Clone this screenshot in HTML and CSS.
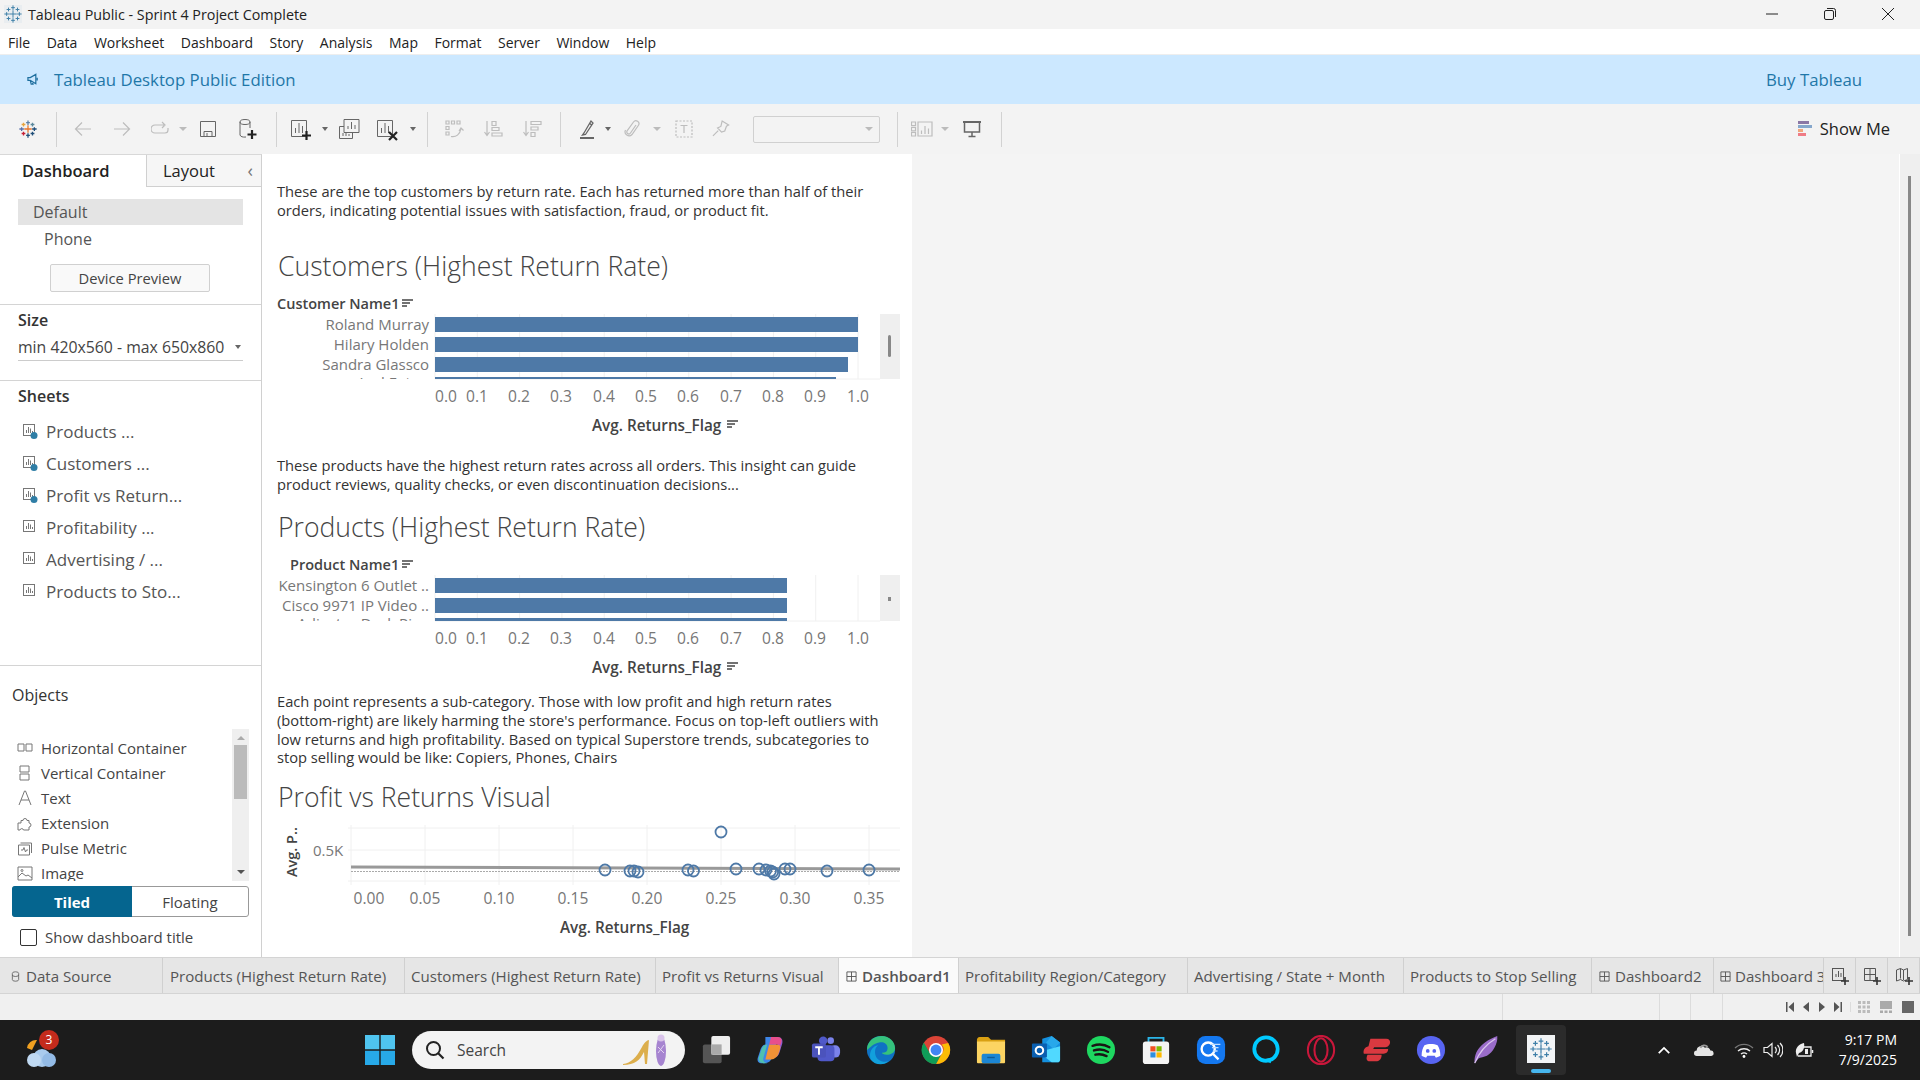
FILE: index.html
```html
<!DOCTYPE html>
<html lang="en">
<head>
    <meta charset="UTF-8">
    <title>Tableau Public - Sprint 4 Project Complete</title>
    <link rel="stylesheet" href="styles.css">
</head>
<body>

    <!-- shared icons -->
    <svg class="sprite" xmlns="http://www.w3.org/2000/svg">
        <symbol id="logo" viewBox="0 0 24 24">
            <path d="M12 7v10M7 12h10M12 .5v6M9.5 3.500h5M12 17.500v6M9.500 20.500h5M.5 12h6M3.500 9.500v5M17.500 12h6M20.500 9.500v5M6 3.500v5M3.500 6h5M18 3.500v5M15.500 6h5M6 15.500v5M3.500 18h5M18 15.500v5M15.500 18h5"/>
        </symbol>
        <symbol id="sheet" viewBox="0 0 16 16">
            <rect x="1.500" y="1.500" width="11" height="11" fill="none" stroke="#777"/>
            <path d="M4.500 10V7M6.500 10V4M8.500 10V5.500M10.500 10V8" stroke="#777"/>
        </symbol>
        <symbol id="sheet-used" viewBox="0 0 16 16">
            <rect x="1.500" y="1.500" width="11" height="11" fill="none" stroke="#777"/>
            <path d="M4.500 10V7M6.500 10V4M8.500 10V5.500M10.500 10V8" stroke="#777"/>
            <circle cx="12" cy="12.500" r="3.500" fill="#2f7ea6"/>
        </symbol>
        <symbol id="sortmark" viewBox="0 0 11 10">
            <path d="M0 1h11M0 4h8M0 7h5" stroke="#444" stroke-width="1.500" fill="none"/>
        </symbol>
        <symbol id="grid-tab" viewBox="0 0 12 12">
            <path d="M1 1h10v10H1zM6 1v10M1 6h10" fill="none" stroke="#555"/>
        </symbol>
    </svg>

    <div class="titlebar">
        <svg class="app-icon" viewBox="0 0 24 24"><rect width="24" height="24" fill="#e9edf0"/><use href="#logo" class="logo-mono"/></svg>
        <span class="app-title">Tableau Public - Sprint 4 Project Complete</span>
        <div class="winctl">
            <svg viewBox="0 0 12 12"><path d="M0 6h12"/></svg>
            <svg viewBox="0 0 12 12"><rect x=".5" y="2.500" width="9" height="9" rx="1.500"/><path d="M3 .5h6.500a2 2 0 0 1 2 2V9"/></svg>
            <svg viewBox="0 0 12 12"><path d="M0 0l12 12M12 0L0 12"/></svg>
        </div>
    </div>

    <div class="menubar">
        <span>File</span><span>Data</span><span>Worksheet</span><span>Dashboard</span><span>Story</span><span>Analysis</span><span>Map</span><span>Format</span><span>Server</span><span>Window</span><span>Help</span>
    </div>

    <div class="banner">
        <svg class="horn" viewBox="0 0 14 14"><path d="M1 5v3h2.500l6 3.500V1.500L3.500 5zM3.500 8l1 4h2l-1-3M11 5v3" fill="none" stroke="#1f6f9f" stroke-width="1.300"/></svg>
        <span class="banner-text">Tableau Desktop Public Edition</span>
        <span class="buy">Buy Tableau</span>
    </div>

    <div class="toolbar">
        <div class="tb-logo"><svg viewBox="0 0 24 24" class="i18"><g class="logo-color">
            <path d="M12 7v10M7 12h10" stroke="#e8762c"/>
            <path d="M12 .5v6M9.500 3.500h5" stroke="#5b7fa6"/>
            <path d="M12 17.500v6M9.500 20.500h5" stroke="#1f4e79"/>
            <path d="M.5 12h6M3.500 9.500v5" stroke="#5a6fa8"/>
            <path d="M17.500 12h6M20.500 9.500v5" stroke="#1f4e79"/>
            <path d="M6 3.500v5M3.500 6h5" stroke="#e8a33d"/>
            <path d="M18 3.500v5M15.500 6h5" stroke="#59879b"/>
            <path d="M6 15.500v5M3.500 18h5" stroke="#c72035"/>
            <path d="M18 15.500v5M15.500 18h5" stroke="#1f4e79"/>
        </g></svg></div>
        <i class="tb-sep"></i>

        <div class="tb-group tb-history">
            <span class="tool"><svg class="i18 dim" viewBox="0 0 18 18"><path d="M17 9H2M8 2.500L1.500 9 8 15.500" stroke-width="2"/></svg></span>
            <span class="tool"><svg class="i18 dim" viewBox="0 0 18 18"><path d="M1 9h15M10 2.500L16.500 9 10 15.500" stroke-width="2"/></svg></span>
            <span class="tool"><svg class="i18 dim" viewBox="0 0 18 18"><path d="M13 5H4a3 3 0 0 0 0 8h10a3 3 0 0 0 3-3V8M11 2l3 3-3 3" stroke-width="1.400"/></svg></span>
            <span class="caret"></span>
            <span class="tool"><svg class="i20 dark" viewBox="0 0 20 20"><path d="M2.500 2.500h15v15h-15zM6 17.500v-5h8v5M9 14v3.500h3"/></svg></span>
            <span class="tool"><svg class="i24 dark" viewBox="0 0 24 24"><ellipse cx="10" cy="5" rx="5" ry="2.500"/><path d="M5 5v13a5 2.500 0 0 0 6 2M15 5v6"/><path d="M17 13v9M12.500 17.500h9" stroke="#222" stroke-width="2.200"/></svg></span>
        </div>
        <i class="tb-sep"></i>

        <div class="tb-group tb-sheets">
            <span class="tool"><svg class="i24 dark" viewBox="0 0 24 24"><path d="M2.500 3.500h15v16h-15zM6.500 16v-5M10 16V6M13.500 16V9"/><path d="M17.500 14v9M13 18.500h9" stroke="#222" stroke-width="2.200"/></svg></span>
            <span class="caret dark-caret"></span>
            <span class="tool"><svg class="i24 dark" viewBox="0 0 24 24"><path d="M7 2.500h15v13H7zM11 12V9M14.500 12V5M18 12V8"/><path d="M2.500 9.500H7M2.500 9.500v12h13v-6M6 19v-3M9 19v-4M12 19v-2"/></svg></span>
            <span class="tool"><svg class="i24 dark" viewBox="0 0 24 24"><path d="M2.500 3.500h15v16h-15zM6.500 16v-5M10 16V6M13.500 16V9"/><path d="M14 15l8 8M22 15l-8 8" stroke="#222" stroke-width="2.200"/></svg></span>
            <span class="caret dark-caret"></span>
        </div>
        <i class="tb-sep"></i>

        <div class="tb-group tb-sort">
            <span class="tool"><svg class="i20 dim" viewBox="0 0 20 20"><path d="M2 2h3v3H2zM7.500 2h3v3h-3zM13 2h3v3h-3zM2 7.500h3v3H2zM2 13h3v3H2zM7 17.500c5 1 9-2 10-8M15 12l2-3 2.500 2.500"/></svg></span>
            <span class="tool"><svg class="i20 dim" viewBox="0 0 20 20"><path d="M4 2v14M1.500 13L4 16.500 6.500 13M9 2.500h4v4H9zM9 8.500h7v3H9zM9 14h10v3H9z"/></svg></span>
            <span class="tool"><svg class="i20 dim" viewBox="0 0 20 20"><path d="M4 2v14M1.500 13L4 16.500 6.500 13M9 2.500h10v3H9zM9 8h7v3H9zM9 13.500h4v4H9z"/></svg></span>
        </div>
        <i class="tb-sep"></i>

        <div class="tb-group tb-format">
            <span class="tool"><svg class="i20 dark" viewBox="0 0 20 20"><path d="M6 14l-1.500 2 3-.5L15 4l-2-2zM11.500 4l2 2" stroke-width="1.300"/><path d="M2 19h14" stroke-width="2"/></svg></span>
            <span class="caret dark-caret"></span>
            <span class="tool"><svg class="i20 dim" viewBox="0 0 20 20"><path d="M13 6l-5.500 8a2 2 0 0 1-3.400-2.200L10.500 3a3 3 0 0 1 5 3.300L9 15.500a4 4 0 0 1-6.500-4.500"/></svg></span>
            <span class="caret"></span>
            <span class="tool"><svg class="i18 dim" viewBox="0 0 18 18"><path d="M1 1h16v16H1z" stroke-dasharray="2 1.500"/><path d="M5.500 5.500h7M9 5.500v7.500"/></svg></span>
            <span class="tool"><svg class="i18 dim" viewBox="0 0 18 18"><path d="M9 1l7 3-2 1.500-1 5-3 1.500L5.500 8.500l3-2zM6.500 11L2 17" transform="rotate(8 9 9)"/></svg></span>
            <span class="tb-select"><span class="caret"></span></span>
        </div>
        <i class="tb-sep"></i>

        <div class="tb-group tb-view">
            <span class="tool"><svg class="i22 dim" viewBox="0 0 24 16"><path d="M.5 1h4v3.500h-4zM.5 6.300h4v3.500h-4zM.5 11.500h4V15h-4zM7 1h14v14H7z"/><path d="M10.500 13V9.500M14 13V5M17.500 13V7.500" stroke-width="2"/></svg></span>
            <span class="caret"></span>
            <span class="tool"><svg class="i20 darker" viewBox="0 0 20 20"><path d="M1 3h18" stroke-width="2"/><path d="M2.500 4v9h15V4M10 13v4.500M6.500 17.500h7" stroke-width="1.500"/></svg></span>
        </div>
        <i class="tb-sep"></i>

        <div class="show-me">
            <span class="sm-bars"><i></i><i></i><i></i><i></i></span>
            <span>Show Me</span>
        </div>
    </div>

    <div class="work">
        <aside class="side">
            <div class="side-tabs">
                <span class="side-tab active">Dashboard</span>
                <span class="side-tab">Layout<em>‹</em></span>
            </div>

            <div class="side-sec devices">
                <div class="device on">Default</div>
                <div class="device">Phone</div>
                <div class="device-btn">Device Preview</div>
            </div>

            <div class="side-sec size-sec">
                <h4>Size</h4>
                <div class="size-pick"><span>min 420x560 - max 650x860</span><span class="caret dark-caret"></span></div>
            </div>

            <div class="side-sec sheets-sec">
                <h4>Sheets</h4>
                <ul class="sheets">
                    <li><svg viewBox="0 0 16 16"><use href="#sheet-used"/></svg>Products ...</li>
                    <li><svg viewBox="0 0 16 16"><use href="#sheet-used"/></svg>Customers ...</li>
                    <li><svg viewBox="0 0 16 16"><use href="#sheet-used"/></svg>Profit vs Return...</li>
                    <li><svg viewBox="0 0 16 16"><use href="#sheet"/></svg>Profitability ...</li>
                    <li><svg viewBox="0 0 16 16"><use href="#sheet"/></svg>Advertising / ...</li>
                    <li><svg viewBox="0 0 16 16"><use href="#sheet"/></svg>Products to Sto...</li>
                </ul>
            </div>

            <div class="objects">
                <h5>Objects</h5>
                <div class="obj-list">
                    <ul>
                        <li><svg viewBox="0 0 16 16"><path d="M1 4h6v7H1zM9 4h6v7H9z"/></svg>Horizontal Container</li>
                        <li><svg viewBox="0 0 16 16"><path d="M3 1h9v6H3zM3 9h9v6H3z"/></svg>Vertical Container</li>
                        <li><svg viewBox="0 0 16 16"><path d="M2 15L7.500 1h1L14 15M4 10h8"/></svg>Text</li>
                        <li><svg viewBox="0 0 16 16"><path d="M1 8h3V5.500h2a2 2 0 0 1 4 0h2V8a2 2 0 0 1 0 4v3H6.500a1.800 1.800 0 0 0-3.500 0H1z"/></svg>Extension</li>
                        <li><svg viewBox="0 0 16 16"><path d="M1.500 5h11v10h-11zM3.500 3h11v10M4 10h2l1-2.500L8.500 12l1-2h1.500"/></svg>Pulse Metric</li>
                        <li><svg viewBox="0 0 16 16"><path d="M1 2h14v13H1zM1 12l4-4 4 3 2-1 4 3"/><circle cx="5" cy="5.500" r="1"/></svg>Image</li>
                    </ul>
                    <div class="obj-scroll"><b class="up"></b><i></i><b class="down"></b></div>
                </div>
                <div class="seg"><span class="seg-on">Tiled</span><span>Floating</span></div>
                <label class="chk"><i></i>Show dashboard title</label>
            </div>
        </aside>

        <main class="canvas">
            <p class="note">These are the top customers by return rate. Each has returned more than half of their<br>orders, indicating potential issues with satisfaction, fraud, or product fit.</p>
            <h2 class="viz-title first">Customers (Highest Return Rate)</h2>
            <svg class="chart chart-cust" viewBox="262 290 640 145">
                <defs><clipPath id="clip1"><rect x="262" y="314" width="618" height="65"/></clipPath></defs>
                <text class="hdr" x="277" y="309">Customer Name1</text>
                <use href="#sortmark" x="402" y="299" width="11" height="10"/>
                <path class="grid" d="M435 314v65M477.300 314v65M519.600 314v65M561.900 314v65M604.200 314v65M646.500 314v65M688.800 314v65M731.100 314v65M773.400 314v65M815.700 314v65M858 314v65M435 379h445"/>
                <g clip-path="url(#clip1)">
                    <rect class="bar" x="435" y="317" width="423" height="15"/>
                    <rect class="bar" x="435" y="337" width="423" height="15"/>
                    <rect class="bar" x="435" y="357" width="413" height="15"/>
                    <rect class="bar" x="435" y="377" width="401" height="15"/>
                    <text class="lbl end" x="429" y="330">Roland Murray</text>
                    <text class="lbl end" x="429" y="350">Hilary Holden</text>
                    <text class="lbl end" x="429" y="370">Sandra Glassco</text>
                    <text class="lbl end" x="429" y="388">Joel Eaton</text>
                </g>
                <rect class="strip" x="880" y="314" width="20" height="65"/>
                <rect class="thumb" x="888" y="335" width="3" height="22" rx="1.500"/>
                <g class="tick mid">
                    <text x="446" y="402">0.0</text><text x="477" y="402">0.1</text><text x="519" y="402">0.2</text><text x="561" y="402">0.3</text><text x="604" y="402">0.4</text><text x="646" y="402">0.5</text><text x="688" y="402">0.6</text><text x="731" y="402">0.7</text><text x="773" y="402">0.8</text><text x="815" y="402">0.9</text><text x="858" y="402">1.0</text>
                </g>
                <text class="hdr axis" x="592" y="431">Avg. Returns_Flag</text>
                <use href="#sortmark" x="727" y="420" width="11" height="10"/>
            </svg>

            <p class="note note-2">These products have the highest return rates across all orders. This insight can guide<br>product reviews, quality checks, or even discontinuation decisions...</p>
            <h2 class="viz-title second">Products (Highest Return Rate)</h2>
            <svg class="chart chart-prod" viewBox="262 552 640 128">
                <defs><clipPath id="clip2"><rect x="262" y="575" width="618" height="46"/></clipPath></defs>
                <text class="hdr" x="290" y="570">Product Name1</text>
                <use href="#sortmark" x="402" y="560" width="11" height="10"/>
                <path class="grid" d="M435 575v46M477.300 575v46M519.600 575v46M561.900 575v46M604.200 575v46M646.500 575v46M688.800 575v46M731.100 575v46M773.400 575v46M815.700 575v46M858 575v46M435 621h445"/>
                <g clip-path="url(#clip2)">
                    <rect class="bar" x="435" y="578" width="352" height="15"/>
                    <rect class="bar" x="435" y="598" width="352" height="15"/>
                    <rect class="bar" x="435" y="618" width="352" height="15"/>
                    <text class="lbl end" x="429" y="591">Kensington 6 Outlet ..</text>
                    <text class="lbl end" x="429" y="611">Cisco 9971 IP Video ..</text>
                    <text class="lbl end" x="429" y="629">Adjustac Desk Pin..</text>
                </g>
                <rect class="strip" x="880" y="575" width="20" height="46"/>
                <rect class="thumb" x="888" y="597" width="3" height="4"/>
                <g class="tick mid">
                    <text x="446" y="644">0.0</text><text x="477" y="644">0.1</text><text x="519" y="644">0.2</text><text x="561" y="644">0.3</text><text x="604" y="644">0.4</text><text x="646" y="644">0.5</text><text x="688" y="644">0.6</text><text x="731" y="644">0.7</text><text x="773" y="644">0.8</text><text x="815" y="644">0.9</text><text x="858" y="644">1.0</text>
                </g>
                <text class="hdr axis" x="592" y="673">Avg. Returns_Flag</text>
                <use href="#sortmark" x="727" y="662" width="11" height="10"/>
            </svg>

            <p class="note note-3">Each point represents a sub-category. Those with low profit and high return rates<br>(bottom-right) are likely harming the store's performance. Focus on top-left outliers with<br>low returns and high profitability. Based on typical Superstore trends, subcategories to<br>stop selling would be like: Copiers, Phones, Chairs</p>
            <h2 class="viz-title third">Profit vs Returns Visual</h2>
            <svg class="chart chart-scatter" viewBox="262 818 640 122">
                <path class="grid" d="M351 825v60M425 825v60M499 825v60M573 825v60M647 825v60M721 825v60M795 825v60M869 825v60M348 828h552M348 850h552M348 881h552"/>
                <path class="trend" d="M351 867L900 869"/>
                <path class="trend-band" d="M351 871.500L900 871.500"/>
                <g class="dots">
                    <circle cx="605" cy="870" r="5.500"/><circle cx="630" cy="871" r="5.500"/><circle cx="634" cy="871" r="5.500"/><circle cx="638" cy="872" r="5.500"/><circle cx="688" cy="870" r="5.500"/><circle cx="693.500" cy="871" r="5.500"/><circle cx="721" cy="832" r="5.500"/><circle cx="736" cy="869" r="5.500"/><circle cx="759" cy="869" r="5.500"/><circle cx="766" cy="870" r="5.500"/><circle cx="770.500" cy="871" r="5.500"/><circle cx="772.600" cy="872" r="5.500"/><circle cx="774" cy="874" r="5.500"/><circle cx="785" cy="869" r="5.500"/><circle cx="790" cy="869" r="5.500"/><circle cx="827" cy="871" r="5.500"/><circle cx="869" cy="870" r="5.500"/>
                </g>
                <text class="lbl" x="313" y="856">0.5K</text>
                <text class="hdr" transform="translate(297 877) rotate(-90)">Avg. P..</text>
                <g class="tick mid">
                    <text x="369" y="904">0.00</text><text x="425" y="904">0.05</text><text x="499" y="904">0.10</text><text x="573" y="904">0.15</text><text x="647" y="904">0.20</text><text x="721" y="904">0.25</text><text x="795" y="904">0.30</text><text x="869" y="904">0.35</text>
                </g>
                <text class="hdr axis" x="560" y="933">Avg. Returns_Flag</text>
            </svg>
        </main>

        <div class="backdrop"><div class="page-scroll"><i></i></div></div>
    </div>

    <div class="tabs">
        <span class="tab tab-ds"><svg viewBox="0 0 10 14"><path d="M1 3a4 2 0 0 1 8 0v8a4 2 0 0 1-8 0zM1 5a4 2 0 0 0 8 0" fill="none" stroke="#555"/></svg>Data Source</span>
        <span class="tab tab-a">Products (Highest Return Rate)</span>
        <span class="tab tab-b">Customers (Highest Return Rate)</span>
        <span class="tab tab-c">Profit vs Returns Visual</span>
        <span class="tab tab-d tab-on"><svg viewBox="0 0 12 12"><use href="#grid-tab"/></svg>Dashboard1</span>
        <span class="tab tab-e">Profitability Region/Category</span>
        <span class="tab tab-f">Advertising / State + Month</span>
        <span class="tab tab-g">Products to Stop Selling</span>
        <span class="tab tab-h"><svg viewBox="0 0 12 12"><use href="#grid-tab"/></svg>Dashboard2</span>
        <span class="tab tab-i"><svg viewBox="0 0 12 12"><use href="#grid-tab"/></svg>Dashboard 3</span>
        <span class="tab-add"><svg viewBox="0 0 20 20"><rect x="2.500" y="2.500" width="11" height="12" fill="none" stroke="#555"/><path d="M6 11V8M8.500 11V5M11 11V7" stroke="#555"/><path d="M15 11v8M11 15h8" stroke="#333" stroke-width="1.600"/></svg></span>
        <span class="tab-add"><svg viewBox="0 0 20 20"><path d="M2.500 2.500h11v12h-11zM8 2.500v12M2.500 8.500h11" fill="none" stroke="#555"/><path d="M15 11v8M11 15h8" stroke="#333" stroke-width="1.600"/></svg></span>
        <span class="tab-add"><svg viewBox="0 0 20 20"><path d="M2.500 4l4-1.500 3 1.500 4-1.500v11l-4 1.500-3-1.500-4 1.500zM6.500 2.500v10M9.500 4v10" fill="none" stroke="#555"/><path d="M15 11v8M11 15h8" stroke="#333" stroke-width="1.600"/></svg></span>
    </div>

    <div class="statusbar">
        <i class="st-div d1"></i><i class="st-div d2"></i><i class="st-div d3"></i><i class="st-div d4"></i>
        <div class="st-nav">
            <svg viewBox="0 0 8 10"><path d="M0 0h1.500v10H0zM8 0v10L2.500 5z"/></svg>
            <svg viewBox="0 0 8 10"><path d="M7 0v10L1 5z"/></svg>
            <svg viewBox="0 0 8 10"><path d="M1 0v10l6-5z"/></svg>
            <svg viewBox="0 0 8 10"><path d="M8 0H6.500v10H8zM0 0v10l5.500-5z"/></svg>
        </div>
        <div class="st-views">
            <svg viewBox="0 0 12 12" fill="#bbb"><path d="M0 0h3v3H0zM4.500 0h3v3h-3zM9 0h3v3H9zM0 4.500h3v3H0zM4.500 4.500h3v3h-3zM9 4.500h3v3H9zM0 9h3v3H0zM4.500 9h3v3h-3zM9 9h3v3H9z"/></svg>
            <svg viewBox="0 0 12 12" fill="#aaa"><path d="M0 0h12v8H0zM0 9.500h3v2.500H0zM4.500 9.500h3v2.500h-3zM9 9.500h3v2.500H9z"/></svg>
            <svg viewBox="0 0 12 12" fill="#666"><path d="M0 0h12v12H0z"/></svg>
        </div>
    </div>

    <div class="taskbar">
        <div class="weather">
            <svg viewBox="0 0 32 36"><path d="M12 8a9 9 0 0 0-10 8l5 2z" fill="#f0a020"/><circle cx="17" cy="26" r="9" fill="#a9cbee"/><circle cx="9" cy="28" r="7" fill="#c0d9f2"/><circle cx="24" cy="28" r="7" fill="#93bbe6"/></svg>
            <b>3</b>
        </div>
        <div class="start">
            <svg class="win" viewBox="0 0 30 30"><path fill="#4fc4ef" d="M0 0h14.300v14.300H0zM15.700 0H30v14.300H15.700z"/><path fill="#27a9e8" d="M0 15.700h14.300V30H0zM15.700 15.700H30V30H15.700z"/></svg>
            <div class="search">
                <svg viewBox="0 0 20 20"><circle cx="8.500" cy="8.500" r="6.500" fill="none" stroke="#222" stroke-width="2"/><path d="M13 13l5.500 5.500" stroke="#222" stroke-width="2.200"/></svg>
                <span>Search</span>
                <svg class="promo" viewBox="0 0 46 34"><path d="M0 31c8-1 13-6 19-17 2-4 5-7 7-7l-2 24h-2l-1-12c-4 8-9 13-21 13z" fill="#dcae4c"/><ellipse cx="38" cy="18" rx="5" ry="15" fill="#a684d0"/><circle cx="38" cy="5" r="3.500" fill="#d9c3ea"/><path d="M35 14l6 6M41 12l-6 8" stroke="#e3d4f0"/></svg>
            </div>
            <svg class="ti" viewBox="0 0 32 32"><rect x="2" y="10" width="20" height="20" rx="2" fill="#555"/><rect x="11" y="1" width="20" height="20" rx="2" fill="#eee"/><rect x="11" y="10" width="11" height="11" fill="#aaa"/></svg>
            <svg class="ti" viewBox="0 0 32 32"><path d="M10 2h8c4 0 5 3 4 6l-5 16c-1 4-4 6-8 6H5c-3 0-4-3-3-6l3-9c1-3 3-5 5-5z" fill="#3d86e8"/><path d="M14 2h9c4 0 6 3 5 7l-3 10c-1 3-3 5-6 5l4-14c1-4-3-8-9-8z" fill="#8a5cd6"/><path d="M8 30c-4 0-6-3-5-6l3-9c1-3 3-5 6-5l-4 14c-1 4 1 6 4 6z" fill="#4fc0b0"/><path d="M14 10h9c4 0 3 4 2 7l-1 3c-1 3-4 6-8 6h-6z" fill="#f39236"/><path d="M16 2h7c4 0 5 3 4 6l-1 3c-1-1-2-1-4-1h-8z" fill="#e84f8c"/></svg>
            <svg class="ti" viewBox="0 0 32 32"><circle cx="21" cy="6" r="3.500" fill="#7b83eb"/><rect x="20" y="11" width="11" height="13" rx="5" fill="#7b83eb"/><circle cx="13" cy="6" r="4.500" fill="#5059c9"/><rect x="7" y="11" width="18" height="17" rx="4" fill="#5059c9"/><rect x="1" y="9" width="15" height="15" rx="2" fill="#4b53bc"/><path d="M4.500 13h8M8.500 13v8" stroke="#fff" stroke-width="2"/></svg>
            <svg class="ti" viewBox="0 0 32 32"><circle cx="16" cy="16" r="15" fill="#0f72c4"/><path d="M1 16C1 7 8 1 17 1c8 0 14 6 14 13 0 5-5 7-9 7-3 0-5-1-5-2 4 0 6-2 6-5 0-5-5-7-9-6-6 1-9 5-13 8z" fill="#35c27d"/><path d="M5 26c-2-5 0-14 8-15-3 2-4 6-3 10 1 5 7 9 14 7-5 5-15 4-19-2z" fill="#12a0dc"/></svg>
            <svg class="ti" viewBox="0 0 32 32"><circle cx="16" cy="16" r="15" fill="#db4437"/><path d="M29 8.500A15 15 0 0 1 16 31l6.500-11.500A7.500 7.500 0 0 0 22 10z" fill="#fbbc05"/><path d="M3 8l6.500 11.500A7.500 7.500 0 0 0 22 19.500L16 31A15 15 0 0 1 3 8z" fill="#0f9d58"/><circle cx="16" cy="16" r="7.500" fill="#fff"/><circle cx="16" cy="16" r="5.800" fill="#4285f4"/></svg>
            <svg class="ti" viewBox="0 0 32 32"><path d="M1 5c0-1 1-3 3-3h9l3 3h15v3H1z" fill="#d9a012"/><path d="M1 7h30v22c0 1-1 1-1 1H2s-1 0-1-1z" fill="#fcd462"/><rect x="6" y="20" width="20" height="10" rx="2" fill="#1c86d4"/><path d="M12 24h8" stroke="#0f5b96" stroke-width="1.500"/></svg>
            <svg class="ti" viewBox="0 0 32 32"><path d="M12 4l10-3 9 7v18c0 2-1 3-3 3H12z" fill="#1490df"/><path d="M22 1l9 7-7 7-8-7z" fill="#28a8ea"/><path d="M8 18l14 11h6c2 0 3-1 3-3V12z" fill="#50d9ff"/><rect x="1" y="9" width="16" height="15" rx="1" fill="#0a5fb0"/><circle cx="9" cy="16.500" r="4" fill="none" stroke="#fff" stroke-width="2.200"/></svg>
            <svg class="ti" viewBox="0 0 32 32"><circle cx="16" cy="16" r="15" fill="#1ed760"/><path d="M7 11.500c6-2 13-1.500 18 1.500M8.500 16.500c5-1.500 11-1 15 1.500M10 21c4-1 8-.5 12 1.500" fill="none" stroke="#191414" stroke-width="2.500" stroke-linecap="round"/></svg>
            <svg class="ti" viewBox="0 0 32 32"><path d="M8 8V3h16v5" fill="none" stroke="#2bb5e8" stroke-width="2"/><rect x="2" y="7" width="28" height="24" rx="3" fill="#f4f4f4"/><path fill="#f25022" d="M10 12h5.500v5.500H10z"/><path fill="#7fba00" d="M16.500 12H22v5.500h-5.500z"/><path fill="#2f8fe0" d="M10 18.500h5.500V24H10z"/><path fill="#ffb900" d="M16.500 18.500H22V24h-5.500z"/></svg>
            <svg class="ti" viewBox="0 0 32 32"><rect x="1" y="1" width="30" height="30" rx="9" fill="#1478f0"/><circle cx="13" cy="15" r="7" fill="none" stroke="#fff" stroke-width="2.500"/><path d="M18 20l6 6" stroke="#fff" stroke-width="2.500"/><path d="M15 10h11M17 13.500h7M18 17h5" stroke="#bcdcff" stroke-width="1.500"/></svg>
            <svg class="ti" viewBox="0 0 32 32"><circle cx="16" cy="15" r="12.500" fill="none" stroke="#00caff" stroke-width="4"/><path d="M12 26l9 4 1-6z" fill="#00caff"/></svg>
            <svg class="ti" viewBox="0 0 32 32"><ellipse cx="16" cy="16" rx="14" ry="15" fill="none" stroke="#c9173b" stroke-width="2.200"/><ellipse cx="16" cy="16" rx="7" ry="12.500" fill="none" stroke="#c9173b" stroke-width="2.200"/></svg>
            <svg class="ti" viewBox="0 0 32 32"><path d="M10 4h17c3 0 4 2 4 4s-2 5-5 5H14l-1 2h16c0 3-2 5-5 5H3c-1-4 1-7 5-8l2-8z" fill="#da3940"/><path d="M7 21h15c0 5-3 7-6 7H9c-3 0-4-3-2-7z" fill="#da3940"/></svg>
            <svg class="ti" viewBox="0 0 32 32"><circle cx="16" cy="16" r="15" fill="#5865f2"/><path d="M9 11c4-2 10-2 14 0 2 3 3 7 3 11-2 1-4 2-5 2l-1-2h-8l-1 2c-1 0-3-1-5-2 0-4 1-8 3-11z" fill="#fff"/><circle cx="12.500" cy="17" r="2" fill="#5865f2"/><circle cx="19.500" cy="17" r="2" fill="#5865f2"/></svg>
            <svg class="ti" viewBox="0 0 32 32"><path d="M4 30c-1-9 3-21 24-29 1 8-5 18-11 21-3 1-7 2-9 3z" fill="#9a6cc9"/><path d="M4 30C8 20 16 10 26 4" fill="none" stroke="#dcc8ef" stroke-width="1.400"/></svg>
            <div class="ti-active">
                <svg viewBox="0 0 30 30"><rect width="30" height="30" fill="#f2f4f6"/><g transform="translate(3 3)"><use href="#logo" class="logo-mono" width="24" height="24"/></g></svg>
                <i></i>
            </div>
        </div>
        <div class="tray">
            <svg class="tr tr-chev" viewBox="0 0 16 10"><path d="M2 8l6-6 6 6" fill="none" stroke="#fff" stroke-width="2"/></svg>
            <svg class="tr tr-cloud" viewBox="0 0 22 14"><path d="M3 13a3 3 0 0 1 0-6 5 5 0 0 1 9-3 4 4 0 0 1 6 3 3 3 0 0 1 1 6z" fill="#e4e4e4"/><path d="M7 4a5 5 0 0 1 8-1" fill="none" stroke="#999" stroke-width="2"/></svg>
            <svg class="tr tr-wifi" viewBox="0 0 20 16"><path d="M1 6a13 13 0 0 1 18 0" fill="none" stroke="#777" stroke-width="1.300"/><path d="M4 9a9 9 0 0 1 12 0M7 12a5 5 0 0 1 6 0" fill="none" stroke="#eee" stroke-width="1.400"/><circle cx="10" cy="14.500" r="1.400" fill="#fff"/></svg>
            <svg class="tr tr-vol" viewBox="0 0 20 16"><path d="M1 5.500h3.500L9 1.500v13l-4.500-4H1zM12 5a4 4 0 0 1 0 6M14.500 3a7 7 0 0 1 0 10M17 1a10 10 0 0 1 0 14" fill="none" stroke="#eee" stroke-width="1.200"/></svg>
            <svg class="tr tr-bat" viewBox="0 0 20 16"><path d="M7 5h10v9H4" fill="none" stroke="#eee" stroke-width="1.300"/><path d="M18.500 8v3" stroke="#eee" stroke-width="1.500"/><path d="M2 11c-1-5 3-9 8-10 1 5-1 9-5 10L3 15z" fill="#eee"/><path d="M11 12V7l3 0v5z" fill="#eee"/></svg>
            <div class="clock"><span>9:17 PM</span><span>7/9/2025</span></div>
        </div>
    </div>

</body>
</html>
```

FILE: styles.css
```css
* {
    box-sizing: border-box;
}

html, body {
    margin: 0;
    padding: 0;
}

body {
    width: 1920px;
    height: 1080px;
    overflow: hidden;
    font-family: "Open Sans", "Noto Sans", sans-serif;
    font-size: 14px;
    color: #222;
    background: #f4f4f4;
    display: flex;
    flex-direction: column;
}

.sprite {
    display: none;
}

use.logo-mono {
    stroke: #3f7fa8;
    stroke-width: 1.300;
    fill: none;
}

/* title + menu */
.titlebar {
    height: 29px;
    background: #f3f3f3;
    display: flex;
    align-items: center;
    padding-left: 4px;
}

.app-icon {
    width: 18px;
    height: 18px;
    margin-right: 6px;
}

.app-title {
    font-size: 14.300px;
}

.winctl {
    margin-left: auto;
    display: flex;
    gap: 46px;
    padding-right: 26px;
}

.winctl svg {
    width: 12px;
    height: 12px;
    fill: none;
    stroke: #222;
    stroke-width: 1;
}

.menubar {
    height: 26px;
    background: #fff;
    border-bottom: 1px solid #eee;
    display: flex;
    align-items: center;
    gap: 16.500px;
    padding: 2px 0 0 8px;
    font-size: 14px;
}

.banner {
    height: 50px;
    background: #cce8ff;
    display: flex;
    align-items: center;
    padding: 0 58px 0 27px;
    color: #1f77a8;
    font-size: 16.800px;
}

.horn {
    width: 13px;
    height: 13px;
    margin-right: 14px;
}

.buy {
    margin-left: auto;
}

/* toolbar */
.toolbar {
    height: 50px;
    background: #f3f3f3;
    display: flex;
    align-items: center;
}

.tb-logo {
    width: 56px;
    display: flex;
    justify-content: center;
}

.logo-color path {
    stroke-width: 1.700;
    fill: none;
}

.tb-sep {
    width: 1px;
    height: 35px;
    background: #d2d2d2;
    flex: none;
}

.tb-group {
    display: grid;
    align-items: center;
    grid-auto-flow: column;
}

.tool {
    display: flex;
    justify-content: center;
    align-items: center;
}

.tool svg {
    fill: none;
}

.i18 { width: 18px; height: 18px; }
.i20 { width: 20px; height: 20px; }
.i22 { width: 24px; height: 18px; }
.i24 { width: 24px; height: 24px; }

.dim { stroke: #bdbdbd; }
.dim path { stroke-width: 1.200; }
.dark { stroke: #666; }
.darker { stroke: #666; }

.caret {
    display: block;
    width: 0;
    height: 0;
    justify-self: center;
    border-left: 4px solid transparent;
    border-right: 4px solid transparent;
    border-top: 4px solid #bbb;
}

.dark-caret {
    border-left-width: 3.500px;
    border-right-width: 3.500px;
    border-top-color: #666;
}

.tb-history {
    padding-left: 7px;
    padding-right: 11px;
    grid-template-columns: 38px 38px 36px 8px 40px 36px;
    column-gap: 1px;
}

.tb-sheets {
    padding-left: 5px;
    padding-right: 7px;
    grid-template-columns: 38px 8px 38px 36px 14px;
    column-gap: 1px;
}

.tb-sort {
    padding-left: 6px;
    padding-right: 9px;
    grid-template-columns: 39px 39px 39px;
}

.tb-format {
    padding-left: 12px;
    padding-right: 17px;
    grid-template-columns: 30px 10px 40px 8px 46px 28px 145px;
}

.tb-select {
    height: 27px;
    margin-left: 18px;
    width: 127px;
    border: 1px solid #d0d0d0;
    border-radius: 2px;
    background: #f3f3f3;
    display: flex;
    justify-content: flex-end;
    align-items: center;
    padding-right: 6px;
}

.tb-view {
    padding-left: 10px;
    padding-right: 9px;
    grid-template-columns: 30px 14px 40px;
}

.show-me {
    margin-left: auto;
    padding: 0 30px 1px 0;
    display: flex;
    align-items: center;
    gap: 8px;
    font-size: 16.500px;
}

.sm-bars {
    display: flex;
    flex-direction: column;
    width: 14px;
}

.sm-bars i {
    display: block;
    height: 3px;
    margin-bottom: 1px;
}

.sm-bars i:nth-child(1) { background: #8b77a5; width: 11px; }
.sm-bars i:nth-child(2) { background: #86a7cc; width: 14px; }
.sm-bars i:nth-child(3) { background: #f0a67c; width: 5px; }
.sm-bars i:nth-child(4) { background: #ef7b85; width: 8px; }

/* main row */
.work {
    height: 803px;
    display: flex;
    flex: none;
}

.side {
    width: 262px;
    background: #fff;
    border-top: 1px solid #d8d8d8;
    border-right: 1px solid #d0d0d0;
    display: flex;
    flex-direction: column;
}

.side-tabs {
    height: 32px;
    display: flex;
    font-size: 16.500px;
}

.side-tab {
    display: flex;
    align-items: center;
    padding-left: 22px;
    width: 146px;
}

.side-tab.active {
    font-weight: 600;
    padding-bottom: 2px;
}

.side-tab + .side-tab {
    flex: 1;
    position: relative;
    padding-left: 16px;
    background: #f6f6f6;
    border-left: 1px solid #d0d0d0;
    border-bottom: 1px solid #d0d0d0;
}

.side-tab em {
    position: absolute;
    right: 8px;
    top: 3px;
    font-style: normal;
    color: #777;
    font-size: 18px;
}

.side-sec {
    border-bottom: 1px solid #d4d4d4;
}

.devices {
    height: 118px;
    padding: 12px 18px 0;
    font-size: 16px;
    color: #555;
}

.device {
    height: 28px;
    line-height: 28px;
    padding-left: 26px;
}

.device.on {
    height: 26px;
    line-height: 26px;
    background: #e4e4e4;
    padding-left: 15px;
}

.device-btn {
    width: 160px;
    height: 28px;
    margin: 11px 0 0 32px;
    border: 1px solid #d0d0d0;
    border-radius: 2px;
    background: #f9f9f9;
    text-align: center;
    line-height: 26px;
    font-size: 14.700px;
    color: #444;
}

.side-sec h4, .objects h5 {
    margin: 0;
    font-size: 16px;
    font-weight: 600;
    color: #333;
}

.size-sec {
    height: 76px;
    padding: 4px 18px 0;
}

.size-pick {
    margin-top: 2px;
    height: 28px;
    display: flex;
    justify-content: space-between;
    align-items: center;
    border-bottom: 1px solid #ccc;
    font-size: 15.800px;
    color: #444;
    padding-right: 2px;
}

.sheets-sec {
    height: 285px;
    padding: 4px 18px 0;
}

.sheets {
    list-style: none;
    margin: 8px 0 0;
    padding: 0;
    font-size: 17px;
    color: #555;
}

.sheets li {
    height: 32px;
    display: flex;
    align-items: center;
    padding-left: 4px;
}

.sheets svg {
    width: 16px;
    height: 16px;
    margin-right: 8px;
}

.objects {
    flex: 1;
    padding: 18px 12px 0;
}

.objects h5 {
    font-weight: 500;
    line-height: 22px;
}

.obj-list {
    height: 152px;
    margin-top: 23px;
    display: flex;
    overflow: hidden;
}

.obj-list ul {
    flex: 1;
    list-style: none;
    margin: 0;
    padding: 6px 0 0 5px;
    font-size: 15px;
    color: #444;
}

.obj-list li {
    height: 25px;
    display: flex;
    align-items: center;
    gap: 8px;
}

.obj-list svg {
    width: 16px;
    height: 16px;
    fill: none;
    stroke: #777;
    flex: none;
}

.obj-scroll {
    width: 17px;
    background: #efefef;
    display: flex;
    flex-direction: column;
    align-items: center;
    padding-top: 7px;
}

.obj-scroll i {
    display: block;
    width: 13px;
    height: 54px;
    margin-top: 5px;
    background: #bbb;
}

.obj-scroll b {
    width: 0;
    height: 0;
    border-left: 4px solid transparent;
    border-right: 4px solid transparent;
}

.obj-scroll .up {
    border-bottom: 4px solid #aaa;
}

.obj-scroll .down {
    margin-top: auto;
    margin-bottom: 7px;
    border-top: 4px solid #555;
}

.seg {
    height: 31px;
    margin-top: 5px;
    display: flex;
    border: 1px solid #999;
    border-radius: 3px;
    font-size: 15px;
}

.seg span {
    flex: 1;
    display: flex;
    align-items: center;
    justify-content: center;
    color: #444;
}

.seg .seg-on {
    flex: none;
    width: 120px;
    margin: -1px 0 -1px -1px;
    background: #05658f;
    color: #fff;
    font-weight: 700;
    border-radius: 3px 0 0 3px;
}

.chk {
    display: flex;
    align-items: center;
    gap: 8px;
    margin: 10px 0 0 8px;
    font-size: 15px;
    color: #444;
}

.chk i {
    width: 17px;
    height: 17px;
    border: 1px solid #333;
    border-radius: 2px;
}

/* dashboard */
.canvas {
    width: 650px;
    background: #fff;
    padding: 28px 0 0 15px;
    overflow: hidden;
    flex: none;
}

.note {
    margin: 0;
    font-size: 14.700px;
    line-height: 19px;
    color: #333;
    white-space: nowrap;
}

.note-2 {
    margin-top: 21px;
    line-height: 18.500px;
}

.note-3 {
    margin-top: 12px;
    line-height: 18.800px;
}

.viz-title {
    margin: 0 0 0 1px;
    font-size: 26.600px;
    line-height: 34px;
    font-weight: 300;
    color: #444;
}

.viz-title.first { margin-top: 29px; }
.viz-title.second { margin-top: 17px; }
.viz-title.third { margin-top: 13px; }

.chart {
    display: block;
    width: 640px;
    margin-left: -15px;
    font-family: "Open Sans", sans-serif;
}

.chart-cust { height: 145px; margin-top: 7px; }
.chart-prod { height: 128px; margin-top: 8px; }
.chart-scatter { height: 122px; margin-top: 4px; }

.grid {
    stroke: #f0f0f0;
    fill: none;
}

.bar {
    fill: #4e79a7;
}

.hdr {
    font-size: 14.500px;
    font-weight: 600;
    fill: #444;
}

.hdr.axis {
    font-size: 15.300px;
}

.lbl {
    font-size: 15px;
    fill: #777;
}

.tick {
    font-size: 15.600px;
    fill: #777;
}

.end { text-anchor: end; }
.mid { text-anchor: middle; }

.strip { fill: #efefef; }
.thumb { fill: #888; }

.trend {
    stroke: #999;
    stroke-width: 3;
    fill: none;
}

.trend-band {
    stroke: #aaa;
    stroke-width: 1;
    stroke-dasharray: 2 1;
}

.dots circle {
    fill: none;
    stroke: #4e79a7;
    stroke-width: 1.800;
}

.backdrop {
    flex: 1;
    display: flex;
    justify-content: flex-end;
    background: #f4f4f4;
}

.page-scroll {
    width: 21px;
    background: #efefef;
    border-left: 1px solid #fff;
    padding: 22px 0 21px 8px;
}

.page-scroll i {
    display: block;
    width: 3px;
    height: 100%;
    background: #888;
}

/* sheet tabs */
.tabs {
    height: 37px;
    background: #e6e6e6;
    border-top: 1px solid #d4d4d4;
    border-bottom: 1px solid #d4d4d4;
    display: flex;
    font-size: 15.100px;
    color: #555;
    flex: none;
}

.tab {
    display: flex;
    align-items: center;
    gap: 5px;
    padding: 1px 0 0 7px;
    border-right: 1px solid #d0d0d0;
    white-space: nowrap;
    overflow: hidden;
}

.tab svg {
    width: 11px;
    height: 11px;
    flex: none;
}

.tab-ds { width: 163px; padding-left: 10px; }
.tab-a { width: 242px; }
.tab-b { width: 251px; padding-left: 6px; }
.tab-c { width: 183px; padding-left: 6px; }
.tab-d { width: 120px; }
.tab-e { width: 229px; padding-left: 6px; }
.tab-f { width: 216px; padding-left: 6px; }
.tab-g { width: 188px; padding-left: 6px; }
.tab-h { width: 122px; }
.tab-i { width: 110px; padding-left: 6px; gap: 4px; }

.tab-on {
    background: #fafafa;
    font-weight: 600;
}

.tab-add {
    width: 32px;
    border-right: 1px solid #d0d0d0;
    display: flex;
    align-items: center;
    justify-content: center;
}

.tab-add svg {
    width: 20px;
    height: 20px;
}

.statusbar {
    height: 26px;
    background: #f0f0f0;
    position: relative;
    flex: none;
    display: flex;
    align-items: center;
    justify-content: flex-end;
}

.st-div {
    position: absolute;
    top: 0;
    bottom: 0;
    width: 1px;
    background: #dcdcdc;
}

.d1 { left: 1502px; }
.d2 { left: 1659px; }
.d3 { left: 1690px; }
.d4 { left: 1722px; }

.st-nav {
    display: flex;
    gap: 8px;
    padding-right: 8px;
    border-right: 1px solid #dcdcdc;
}

.st-nav svg {
    width: 8px;
    height: 10px;
    fill: #555;
}

.st-views {
    display: flex;
    gap: 10px;
    padding: 0 6px 0 7px;
}

.st-views svg {
    width: 12px;
    height: 12px;
}

/* windows taskbar */
.taskbar {
    height: 60px;
    flex: none;
    background: #1c1c1c;
    position: relative;
    display: flex;
    align-items: center;
    color: #fff;
}

.weather {
    position: relative;
    width: 32px;
    height: 36px;
    margin-left: 25px;
    flex: none;
}

.weather svg {
    width: 32px;
    height: 36px;
}

.weather b {
    position: absolute;
    top: -2px;
    left: 14px;
    width: 20px;
    height: 20px;
    line-height: 20px;
    border-radius: 50%;
    background: #c42b1c;
    font-size: 12px;
    font-weight: 400;
    text-align: center;
}

.start {
    display: flex;
    align-items: center;
    margin-left: 308px;
}

.win {
    width: 30px;
    height: 30px;
    margin-right: 17px;
}

.search {
    width: 273px;
    height: 38px;
    border-radius: 19px;
    background: #f3f3f3;
    display: flex;
    align-items: center;
    padding-left: 13px;
    color: #444;
    font-size: 15.500px;
    margin-right: 16px;
}

.search svg {
    width: 20px;
    height: 20px;
    margin-right: 12px;
}

.search .promo {
    width: 46px;
    height: 34px;
    margin: 0 16px 0 auto;
}

.ti {
    width: 30px;
    height: 30px;
    margin-right: 25px;
    flex: none;
}

.ti-active {
    width: 50px;
    height: 50px;
    margin-left: -10px;
    border-radius: 4px;
    background: #2b2b2b;
    display: flex;
    flex-direction: column;
    align-items: center;
    padding-top: 10px;
    position: relative;
}

.ti-active svg {
    width: 28px;
    height: 28px;
}

.ti-active i {
    position: absolute;
    bottom: 2px;
    width: 20px;
    height: 4px;
    border-radius: 2px;
    background: #47b6ee;
}

.tray {
    margin-left: auto;
    display: flex;
    align-items: center;
    padding-right: 23px;
}

.tr {
    flex: none;
}

.tr-chev { width: 14px; height: 9px; margin-right: 23px; }
.tr-cloud { width: 20px; height: 13px; margin-right: 20px; }
.tr-wifi { width: 20px; height: 16px; margin-right: 9px; }
.tr-vol { width: 20px; height: 16px; margin-right: 11px; }
.tr-bat { width: 20px; height: 16px; margin-right: 25px; }

.clock {
    display: flex;
    flex-direction: column;
    align-items: flex-end;
    font-size: 14px;
    line-height: 20px;
}
```
